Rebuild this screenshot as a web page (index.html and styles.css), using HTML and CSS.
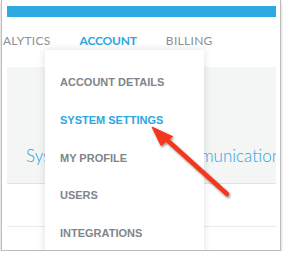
FILE: index.html
```html
<!DOCTYPE html>
<html lang="en">
<head>
  <meta charset="UTF-8">
  <meta name="viewport" content="width=device-width, initial-scale=1.0">
  <title>Account menu</title>
  <link rel="stylesheet" href="styles.css">
</head>
<body>
  <div class="frame">
    <div class="topbar"></div>

    <div class="nav">
      <span class="nav-item">ANALYTICS</span>
      <span class="nav-item active">ACCOUNT</span>
      <span class="nav-item">BILLING</span>
    </div>

    <div class="panel">
      <span class="panel-title">System Alerts</span>
      <span class="panel-title second">Communications</span>
    </div>

    <div class="spacer"></div>

    <!-- Account dropdown -->
    <ul class="dropdown">
      <li>ACCOUNT DETAILS</li>
      <li class="selected">SYSTEM SETTINGS</li>
      <li>MY PROFILE</li>
      <li>USERS</li>
      <li>INTEGRATIONS</li>
    </ul>

    <svg class="arrow" width="100" height="90" viewBox="0 0 100 90">
      <defs>
        <filter id="shadow" x="-20%" y="-20%" width="140%" height="140%">
          <feDropShadow dx="1" dy="1.5" stdDeviation="1" flood-color="#000" flood-opacity="0.45"/>
        </filter>
      </defs>
      <g filter="url(#shadow)" fill="#f2391e" stroke="#f2391e">
        <line x1="22" y1="20" x2="83" y2="75" stroke-width="4.5" stroke-linecap="round"/>
        <polygon points="8,8 17,26.5 28.5,17.5" stroke-width="1" stroke-linejoin="round"/>
      </g>
    </svg>
  </div>
</body>
</html>
```

FILE: styles.css
```css
body {
  margin: 0;
  background-color: white;
  font-family: "Liberation Sans", Arial, sans-serif;
}
.frame {
  position: relative;
  margin-left: 1px;
  width: 269px;
  height: 244px;
  padding: 6px 4px 0 5px;
  border: 1px solid #bdbdbd;
  border-top: none;
  box-shadow: 0 2px 3px rgba(0,0,0,0.25);
  overflow: hidden;
  background-color: white;
}
.topbar {
  height: 11px;
  background-color: #2eaae3;
}
.nav {
  display: flex;
  gap: 29px;
  margin-left: -22px;
  padding-top: 17px;
  height: 50px;
  box-sizing: border-box;
  font-family: Lato, sans-serif;
  font-size: 12px;
  line-height: 14px;
  color: #8b9095;
  letter-spacing: 0.3px;
}
.nav-item.active {
  color: #2ea6df;
  font-weight: bold;
  letter-spacing: -0.2px;
}
.panel {
  display: flex;
  height: 117px;
  box-sizing: border-box;
  padding: 79px 0 0 19px;
  background-color: #f4f5f5;
  border-bottom: 1px solid #dfe3e6;
  white-space: nowrap;
  overflow: hidden;
}
.panel-title {
  font-family: Lato, sans-serif;
  font-weight: 300;
  font-size: 17px;
  line-height: 20px;
  color: #2aa6df;
}
.panel-title.second {
  margin-left: 40px;
}
.spacer {
  height: 42px;
  border-bottom: 1px solid #e8ebef;
}
.dropdown {
  position: absolute;
  left: 43px;
  top: 50px;
  width: 159px;
  height: 220px;
  margin: 0;
  padding: 14px 0 0;
  list-style: none;
  background-color: white;
  box-shadow: 0 0 8px rgba(0,0,0,0.12);
}
.dropdown li {
  padding: 10px 15px;
  font-size: 11px;
  line-height: 17.75px;
  font-weight: bold;
  color: #80858b;
}
.dropdown li.selected {
  color: #2ba6e1;
}
.arrow {
  position: absolute;
  left: 142px;
  top: 119px;
}
```
